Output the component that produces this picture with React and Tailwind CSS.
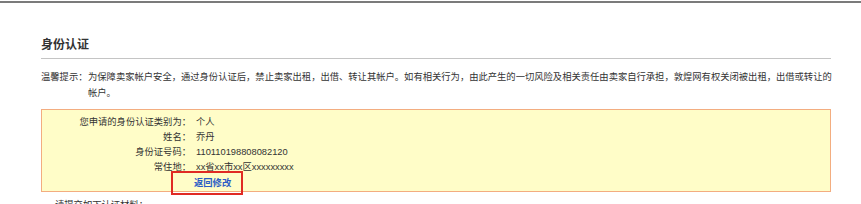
import React from 'react';

const rows = [
    { label: '您申请的身份认证类别为：', value: '个人' },
    { label: '姓名：', value: '乔丹' },
    { label: '身份证号码：', value: '110110198808082120' },
    { label: '常住地：', value: 'xx省xx市xx区xxxxxxxxx' },
];

const App = () => {
    return (
        <div className="w-[861px] h-[204px] overflow-hidden bg-white text-[#333] font-['Liberation_Sans','Noto_Sans_CJK_SC',sans-serif]">
            {/* Top rule */}
            <div className="mt-px h-[2px] bg-[#7b7b7b]"></div>

            <div className="ml-[41px] w-[790px]">
                <h2 className="pt-[34px] pb-[5px] text-[12px] leading-[16px] font-bold text-[#333] border-b border-[#c4c4c4]">
                    身份认证
                </h2>

                {/* Tip */}
                <div className="mt-[10px] flex text-[9.3px] leading-[16px] text-[#333]">
                    <span className="shrink-0 w-[47px]">温馨提示：</span>
                    <p className="w-[746px] shrink-0">
                        为保障卖家帐户安全，通过身份认证后，禁止卖家出租，出借、转让其帐户。如有相关行为，由此产生的一切风险及相关责任由卖家自行承担，敦煌网有权关闭被出租，出借或转让的帐户。
                    </p>
                </div>

                {/* Summary box */}
                <div className="mt-[8px] border border-[#f3ad80] bg-[#fffdc8] pt-[5px] text-[9.3px] leading-[15px]">
                    {rows.map((r) => (
                        <div key={r.label} className="flex">
                            <span className="w-[149px] shrink-0 text-right">{r.label}</span>
                            <span className="ml-[5px]">{r.value}</span>
                        </div>
                    ))}
                    <div className="flex pt-px">
                        <span className="w-[149px] shrink-0"></span>
                        <span className="relative ml-[3px]">
                            <a href="#" className="font-bold text-[#2a5bc6]">返回修改</a>
                            {/* Annotation */}
                            <span className="absolute left-[-23px] top-[-5px] w-[72px] h-[24px] border-2 border-[#e02a24]"></span>
                        </span>
                    </div>
                </div>

                <p className="mt-[5px] pl-[14px] text-[9.3px] leading-[16px]">请提交如下认证材料：</p>
            </div>
        </div>
    );
};

export default App;
